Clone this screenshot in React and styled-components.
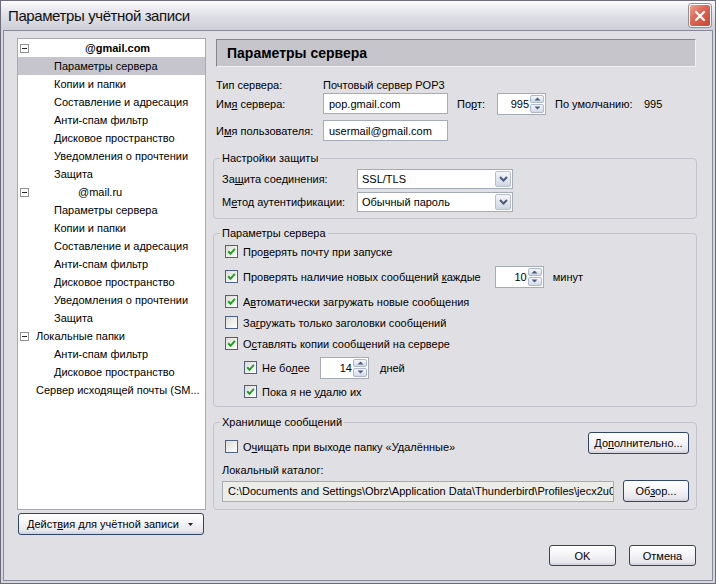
import React from 'react';
import styled, { createGlobalStyle } from 'styled-components';

const GlobalStyle = createGlobalStyle`
  html, body {
    margin: 0;
    padding: 0;
    background: #e0dfe3;
  }
  body {
    font-family: "Liberation Sans", Arial, sans-serif;
    font-size: 11px;
    color: #000;
  }
  * {
    box-sizing: border-box;
  }
`;

const Window = styled.div`
  width: 716px;
  height: 584px;
  display: flex;
  flex-direction: column;
  border: 1px solid #6c6c7c;
  background: #d6d6de;
`;

const TitleBar = styled.div`
  height: 29px;
  flex-shrink: 0;
  display: flex;
  align-items: center;
  justify-content: space-between;
  padding: 0 4px 0 7px;
  background: linear-gradient(#fdfdfe 0%, #ececf2 25%, #dcdce4 60%, #cfcfd9 100%);
`;

const Title = styled.span`
  font-size: 15px;
  letter-spacing: -0.4px;
  color: #111;
`;

const CloseButton = styled.span`
  width: 22px;
  height: 23px;
  border-radius: 3px;
  border: 1px solid #fff;
  box-shadow: 0 0 0 1px #9b8c8c;
  background: linear-gradient(135deg, #f0a294 0%, #dc6a58 40%, #c9432f 100%);
  display: flex;
  align-items: center;
  justify-content: center;
`;

const Body = styled.div`
  flex: 1;
  margin: 0 2px 2px;
  border: 1px solid #8a8a9a;
  background: #e0dfe3;
  display: flex;
  flex-direction: column;
  padding: 7px 15px 14px 13px;
`;

const Main = styled.div`
  display: grid;
  grid-template-columns: 189px 1fr;
  column-gap: 7px;
`;

const LeftColumn = styled.div`
  display: flex;
  flex-direction: column;
`;

const Tree = styled.div`
  height: 472px;
  border: 1px solid #a8a8b4;
  background: #fff;
`;

const TreeRow = styled.div`
  height: 18px;
  display: flex;
  align-items: center;
  padding-left: 2px;
  background: ${(p) => (p.$selected ? '#c6c5cd' : 'transparent')};
  font-weight: ${(p) => (p.$bold ? 'bold' : 'normal')};
  white-space: nowrap;
`;

const ToggleSlot = styled.span`
  width: 9px;
  height: 9px;
  flex-shrink: 0;
  border: ${(p) => (p.$visible ? '1px solid #919191' : 'none')};
  background: ${(p) => (p.$visible ? '#fff' : 'transparent')};
  display: flex;
  align-items: center;
  justify-content: center;
  &::after {
    content: '';
    display: ${(p) => (p.$visible ? 'block' : 'none')};
    width: 5px;
    height: 1px;
    background: #222;
  }
`;

const TreeLabel = styled.span`
  margin-left: ${(p) => p.$offset}px;
`;

const Button = styled.button`
  font: inherit;
  color: #000;
  height: ${(p) => p.$height || 21}px;
  width: ${(p) => (p.$width ? `${p.$width}px` : 'auto')};
  border: 1px solid #2f4668;
  border-radius: 3px;
  background: linear-gradient(#ffffff 0%, #f5f5f8 45%, #e6e6ec 85%, #cfd0d8 100%);
  padding: 0 6px;
  display: inline-flex;
  align-items: center;
  justify-content: center;
  white-space: nowrap;
  flex-shrink: 0;
`;

const ActionsButton = styled(Button)`
  margin: 3px 0 0 1px;
  justify-content: space-between;
  padding: 0 10px 0 8px;
`;

const Key = styled.span`
  text-decoration: underline;
  text-underline-offset: 1px;
`;

const RightColumn = styled.div`
  display: flex;
  flex-direction: column;
`;

const PageHeader = styled.div`
  margin: 1px 1px 0 3px;
  height: 28px;
  display: flex;
  align-items: center;
  padding-left: 10px;
  background: #c6c5cb;
  border: 1px solid;
  border-color: #85858f #f2f2f5 #f2f2f5 #85858f;
  font-size: 14px;
  font-weight: bold;
`;

const InfoRow = styled.div`
  display: flex;
  align-items: center;
  height: ${(p) => p.$height}px;
  margin-top: ${(p) => p.$top}px;
  padding-left: 3px;
  white-space: nowrap;
`;

const Label = styled.span`
  width: ${(p) => (p.$width ? `${p.$width}px` : 'auto')};
  margin-left: ${(p) => p.$gap || 0}px;
  flex-shrink: 0;
`;

const TextField = styled.div`
  width: ${(p) => p.$width}px;
  height: 21px;
  border: 1px solid #a5acb8;
  background: ${(p) => (p.$readOnly ? '#ecece9' : '#fff')};
  padding-left: 5px;
  display: flex;
  align-items: center;
  overflow: hidden;
  white-space: nowrap;
  flex-shrink: 0;
`;

const FieldText = styled.span`
  display: block;
  overflow: hidden;
  width: 100%;
`;

const SpinBox = styled.div`
  width: ${(p) => p.$width}px;
  height: 22px;
  margin-left: ${(p) => p.$gap || 0}px;
  border: 1px solid #a5acb8;
  background: #fff;
  display: flex;
  flex-shrink: 0;
`;

const SpinValue = styled.span`
  flex: 1;
  text-align: right;
  line-height: 20px;
  padding-right: 1px;
`;

const SpinButtons = styled.div`
  width: 15px;
  display: flex;
  flex-direction: column;
  gap: 1px;
  padding: 1px 1px 1px 0;
`;

const SpinArrow = styled.span`
  flex: 1;
  border: 1px solid #aeb8cc;
  border-radius: 2px;
  background: linear-gradient(#f6f7fb, #d2d9e7);
  display: flex;
  align-items: center;
  justify-content: center;
`;

const Group = styled.fieldset`
  margin: ${(p) => p.$top}px 0 0;
  padding: ${(p) => p.$pad};
  border: 1px solid #c3c3cb;
  border-radius: 4px;
  min-width: 0;
`;

const Legend = styled.legend`
  padding: 0 2px;
  margin-left: -2px;
  line-height: 14px;
`;

const SelectRow = styled.div`
  display: flex;
  align-items: center;
  height: 20px;
  margin-top: ${(p) => p.$top}px;
  white-space: nowrap;
`;

const Select = styled.div`
  width: 156px;
  height: 20px;
  border: 1px solid #a5acb8;
  background: #fff;
  display: flex;
  align-items: center;
  padding: 1px;
`;

const SelectText = styled.span`
  flex: 1;
  padding-left: 3px;
`;

const DropButton = styled.span`
  width: 16px;
  align-self: stretch;
  border: 1px solid #b6bfd1;
  border-radius: 2px;
  background: linear-gradient(#f4f6fa, #cfd6e4);
  display: flex;
  align-items: center;
  justify-content: center;
`;

const CheckRow = styled.div`
  display: flex;
  align-items: center;
  height: ${(p) => p.$height || 21}px;
  padding-left: ${(p) => p.$indent || 3}px;
  white-space: nowrap;
`;

const Box = styled.span`
  width: 13px;
  height: 13px;
  flex-shrink: 0;
  margin-right: 5px;
  border: 1px solid #4f6183;
  background: linear-gradient(135deg, #dcdcd7, #ffffff);
  display: flex;
  align-items: center;
  justify-content: center;
`;

const StoreTop = styled.div`
  display: flex;
  align-items: flex-end;
  justify-content: space-between;
  height: 22px;
`;

const PlainLine = styled.div`
  line-height: 15px;
  margin-top: 9px;
`;

const PathRow = styled.div`
  display: flex;
  align-items: center;
  justify-content: space-between;
  height: 22px;
  margin-top: 2px;
`;

const Footer = styled.div`
  margin-top: auto;
  display: flex;
  justify-content: flex-end;
  gap: 13px;
  padding-right: 1px;
`;

const Check = ({ checked }) => (
  <Box>
    {checked && (
      <svg width="9" height="9" viewBox="0 0 9 9">
        <path d="M1.2 4.3 L3.5 6.8 L7.9 1.8" fill="none" stroke="#21a121" strokeWidth="2" />
      </svg>
    )}
  </Box>
);

const Spinner = ({ value, width, gap }) => (
  <SpinBox $width={width} $gap={gap}>
    <SpinValue>{value}</SpinValue>
    <SpinButtons>
      <SpinArrow>
        <svg width="7" height="4" viewBox="0 0 7 4">
          <path d="M0.5 3.5 L3.5 0.5 L6.5 3.5 Z" fill="#4d5a78" />
        </svg>
      </SpinArrow>
      <SpinArrow>
        <svg width="7" height="4" viewBox="0 0 7 4">
          <path d="M0.5 0.5 L3.5 3.5 L6.5 0.5 Z" fill="#4d5a78" />
        </svg>
      </SpinArrow>
    </SpinButtons>
  </SpinBox>
);

const Dropdown = ({ value }) => (
  <Select>
    <SelectText>{value}</SelectText>
    <DropButton>
      <svg width="9" height="6" viewBox="0 0 9 6">
        <path d="M1 1 L4.5 4.5 L8 1" fill="none" stroke="#4d5a78" strokeWidth="2" />
      </svg>
    </DropButton>
  </Select>
);

const treeRows = [
  { label: '@gmail.com', toggle: true, offset: 56, bold: true },
  { label: 'Параметры сервера', offset: 25, selected: true },
  { label: 'Копии и папки', offset: 25 },
  { label: 'Составление и адресация', offset: 25 },
  { label: 'Анти-спам фильтр', offset: 25 },
  { label: 'Дисковое пространство', offset: 25 },
  { label: 'Уведомления о прочтении', offset: 25 },
  { label: 'Защита', offset: 25 },
  { label: '@mail.ru', toggle: true, offset: 49 },
  { label: 'Параметры сервера', offset: 25 },
  { label: 'Копии и папки', offset: 25 },
  { label: 'Составление и адресация', offset: 25 },
  { label: 'Анти-спам фильтр', offset: 25 },
  { label: 'Дисковое пространство', offset: 25 },
  { label: 'Уведомления о прочтении', offset: 25 },
  { label: 'Защита', offset: 25 },
  { label: 'Локальные папки', toggle: true, offset: 7 },
  { label: 'Анти-спам фильтр', offset: 25 },
  { label: 'Дисковое пространство', offset: 25 },
  { label: 'Сервер исходящей почты (SM...', offset: 7 },
];

const App = () => {
  return (
    <>
      <GlobalStyle />
      <Window>
        <TitleBar>
          <Title>Параметры учётной записи</Title>
          <CloseButton>
            <svg width="12" height="12" viewBox="0 0 12 12">
              <path d="M2 2 L10 10 M10 2 L2 10" stroke="#fff" strokeWidth="2.2" strokeLinecap="round" />
            </svg>
          </CloseButton>
        </TitleBar>

        <Body>
          <Main>
            <LeftColumn>
              <Tree>
                {treeRows.map((row, i) => (
                  <TreeRow key={i} $selected={row.selected} $bold={row.bold}>
                    <ToggleSlot $visible={row.toggle} />
                    <TreeLabel $offset={row.offset}>{row.label}</TreeLabel>
                  </TreeRow>
                ))}
              </Tree>
              <ActionsButton $width={186} $height={22}>
                <span>
                  Дейст<Key>в</Key>ия для учётной записи
                </span>
                <svg width="5" height="3" viewBox="0 0 5 3">
                  <path d="M0 0 L5 0 L2.5 3 Z" fill="#222" />
                </svg>
              </ActionsButton>
            </LeftColumn>

            <RightColumn>
              <PageHeader>Параметры сервера</PageHeader>

              <InfoRow $height={16} $top={10}>
                <Label $width={107}>Тип сервера:</Label>
                <span>Почтовый сервер POP3</span>
              </InfoRow>
              <InfoRow $height={21} $top={0}>
                <Label $width={107}>
                  Им<Key>я</Key> сервера:
                </Label>
                <TextField $width={125}>pop.gmail.com</TextField>
                <Label $width={40} $gap={9}>
                  По<Key>р</Key>т:
                </Label>
                <Spinner value="995" width={49} />
                <Label $width={89} $gap={9}>
                  По умолчанию:
                </Label>
                <span>995</span>
              </InfoRow>
              <InfoRow $height={21} $top={6}>
                <Label $width={107}>
                  И<Key>м</Key>я пользователя:
                </Label>
                <TextField $width={125}>usermail@gmail.com</TextField>
              </InfoRow>

              <Group $top={10} $pad="4px 8px 6px 8px">
                <Legend>Настройки защиты</Legend>
                <SelectRow $top={0}>
                  <Label $width={135}>
                    За<Key>щ</Key>ита соединения:
                  </Label>
                  <Dropdown value="SSL/TLS" />
                </SelectRow>
                <SelectRow $top={3}>
                  <Label $width={135}>
                    М<Key>е</Key>тод аутентификации:
                  </Label>
                  <Dropdown value="Обычный пароль" />
                </SelectRow>
              </Group>

              <Group $top={7} $pad="1px 8px 4px 8px">
                <Legend>Параметры сервера</Legend>
                <CheckRow>
                  <Check checked />
                  <span>
                    Про<Key>в</Key>ерять почту при запуске
                  </span>
                </CheckRow>
                <CheckRow $height={29}>
                  <Check checked />
                  <span>
                    Проверять наличие новых сообщений <Key>к</Key>аждые
                  </span>
                  <Spinner value="10" width={49} gap={14} />
                  <Label $gap={9}>минут</Label>
                </CheckRow>
                <CheckRow>
                  <Check checked />
                  <span>
                    А<Key>в</Key>томатически загружать новые сообщения
                  </span>
                </CheckRow>
                <CheckRow>
                  <Check />
                  <span>
                    За<Key>г</Key>ружать только заголовки сообщений
                  </span>
                </CheckRow>
                <CheckRow>
                  <Check checked />
                  <span>
                    О<Key>с</Key>тавлять копии сообщений на сервере
                  </span>
                </CheckRow>
                <CheckRow $height={27} $indent={22}>
                  <Check checked />
                  <Label $width={58}>
                    Не бо<Key>л</Key>ее
                  </Label>
                  <Spinner value="14" width={49} />
                  <Label $gap={11}>дней</Label>
                </CheckRow>
                <CheckRow $indent={22}>
                  <Check checked />
                  <span>
                    Пока я не <Key>у</Key>далю их
                  </span>
                </CheckRow>
              </Group>

              <Group $top={8} $pad="3px 7px 7px 8px">
                <Legend>Хранилище сообщений</Legend>
                <StoreTop>
                  <CheckRow $height={15}>
                    <Check />
                    <span>
                      О<Key>ч</Key>ищать при выходе папку «Удалённые»
                    </span>
                  </CheckRow>
                  <Button $width={101} $height={22}>
                    <span>
                      До<Key>п</Key>олнительно...
                    </span>
                  </Button>
                </StoreTop>
                <PlainLine>Локальный каталог:</PlainLine>
                <PathRow>
                  <TextField $width={392} $readOnly>
                    <FieldText>
                      C:\Documents and Settings\Obrz\Application Data\Thunderbird\Profiles\jecx2u0d
                    </FieldText>
                  </TextField>
                  <Button $width={66} $height={22}>
                    <span>
                      Об<Key>з</Key>ор...
                    </span>
                  </Button>
                </PathRow>
              </Group>
            </RightColumn>
          </Main>

          <Footer>
            <Button $width={67}>OK</Button>
            <Button $width={67}>Отмена</Button>
          </Footer>
        </Body>
      </Window>
    </>
  );
};

export default App;
